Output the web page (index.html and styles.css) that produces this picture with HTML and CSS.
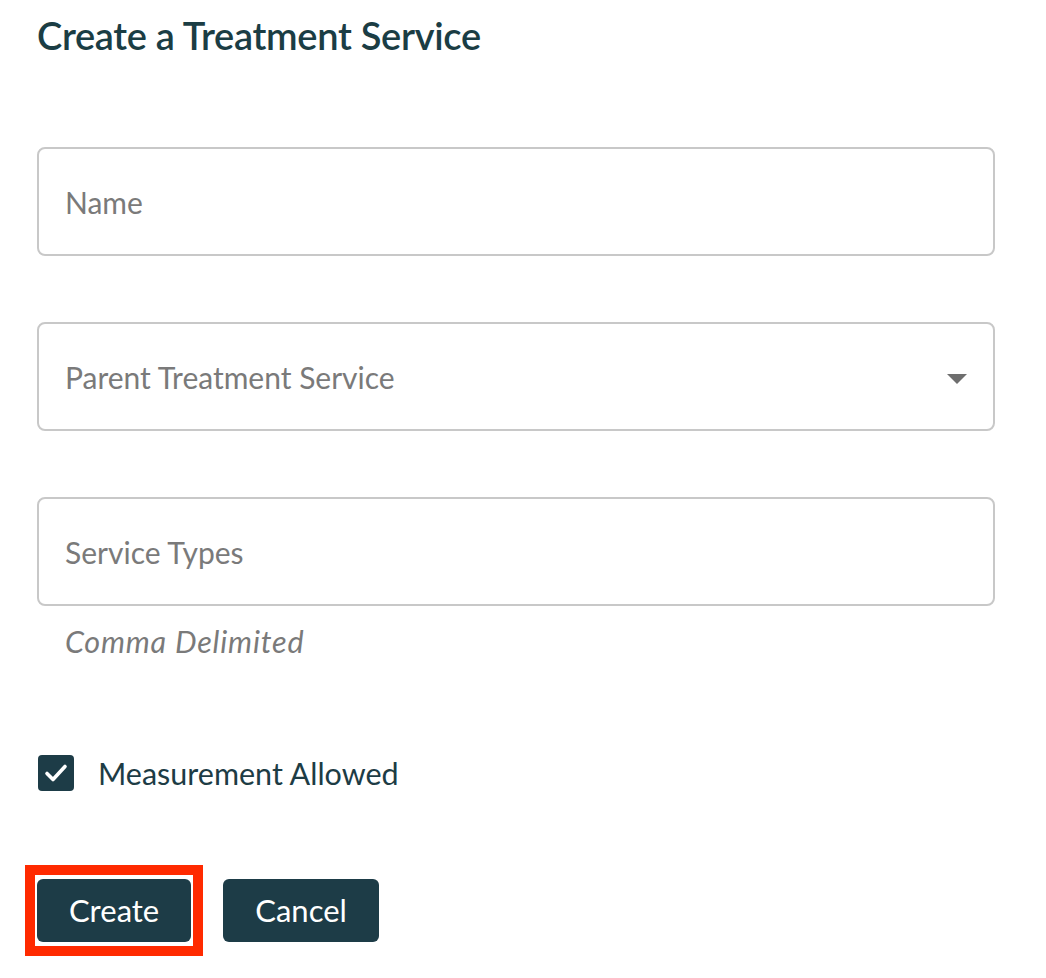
FILE: index.html
```html
<!DOCTYPE html>
<html lang="en">
<head>
<meta charset="utf-8">
<title>Create a Treatment Service</title>
<link rel="stylesheet" href="styles.css">
</head>
<body>
<main class="page">
  <h1 class="title">Create a Treatment Service</h1>
  <form class="form">
    <div class="field">
      <div class="input"><span class="placeholder">Name</span></div>
    </div>
    <div class="field">
      <div class="input select">
        <span class="placeholder">Parent Treatment Service</span>
        <svg class="caret" width="20" height="10" viewBox="0 0 20 10"><path d="M0 0 H20 L10 10 Z" fill="#6e6e6e"/></svg>
      </div>
    </div>
    <div class="field last">
      <div class="input"><span class="placeholder">Service Types</span></div>
      <div class="helper">Comma Delimited</div>
    </div>
    <label class="check">
      <span class="box">
        <svg width="36" height="36" viewBox="0 0 36 36"><path d="M9 18.5 L15 24.5 L27 11.5" fill="none" stroke="#fff" stroke-width="3.6" stroke-linecap="round" stroke-linejoin="round"/></svg>
      </span>
      <span class="check-label">Measurement Allowed</span>
    </label>
    <div class="actions">
      <div class="highlight">
        <button type="button" class="btn">Create</button>
      </div>
      <button type="button" class="btn">Cancel</button>
    </div>
  </form>
</main>
</body>
</html>
```

FILE: styles.css
```css
html, body {
  margin: 0;
  padding: 0;
  background: #ffffff;
}
body {
  font-family: Lato, "Open Sans", sans-serif;
  color: #1d3c45;
}
.page {
  padding: 11px 51px 40px 37px;
}
.title {
  margin: 0;
  font-size: 38px;
  font-weight: 600;
  line-height: 48px;
  color: #1b3d44;
  letter-spacing: -0.3px;
}
.form {
  margin-top: 88px;
  display: flex;
  flex-direction: column;
}
.field {
  margin-bottom: 66px;
}
.input {
  height: 109px;
  box-sizing: border-box;
  border: 2px solid #c8c8c8;
  border-radius: 8px;
  display: flex;
  align-items: center;
  padding: 0 26px 0 26px;
}
.placeholder {
  font-size: 30px;
  color: #7a7a7a;
}
.select {
  justify-content: space-between;
}
.caret {
  display: block;
  margin-top: 4px;
}
.helper {
  margin-top: 16px;
  padding-left: 28px;
  font-size: 30.5px;
  font-style: italic;
  color: #7a7a7a;
  line-height: 38px;
  letter-spacing: 0.8px;
}
.field.last {
  margin-bottom: 95px;
}
.check {
  display: flex;
  align-items: center;
  gap: 24px;
  padding-left: 1px;
}
.box {
  width: 36px;
  height: 36px;
  border-radius: 4px;
  background: #1d3c47;
  display: block;
}
.box svg {
  display: block;
}
.check-label {
  font-size: 30.5px;
  color: #1d3c45;
}
.actions {
  margin-top: 88px;
  display: flex;
  align-items: center;
  gap: 32px;
}
.highlight {
  position: relative;
  display: flex;
}
.highlight::after {
  content: "";
  position: absolute;
  left: -12px;
  right: -12px;
  top: -14px;
  bottom: -14px;
  border: 10px solid #ff2a00;
  pointer-events: none;
}
.btn {
  height: 63px;
  padding: 0 32px;
  border: none;
  border-radius: 6px;
  background: #1d3c47;
  color: #ffffff;
  font-family: Lato, "Open Sans", sans-serif;
  font-size: 31px;
  line-height: 63px;
}
```
